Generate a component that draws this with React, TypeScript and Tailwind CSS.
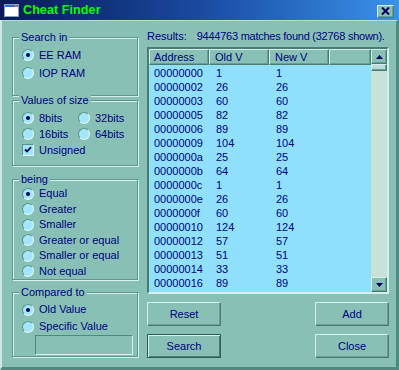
import React from 'react';

const ROWS: [string, string, string][] = [
  ['00000000', '1', '1'],
  ['00000002', '26', '26'],
  ['00000003', '60', '60'],
  ['00000005', '82', '82'],
  ['00000006', '89', '89'],
  ['00000009', '104', '104'],
  ['0000000a', '25', '25'],
  ['0000000b', '64', '64'],
  ['0000000c', '1', '1'],
  ['0000000e', '26', '26'],
  ['0000000f', '60', '60'],
  ['00000010', '124', '124'],
  ['00000012', '57', '57'],
  ['00000013', '51', '51'],
  ['00000014', '33', '33'],
  ['00000016', '89', '89'],
];

const raised =
  'border border-t-[#d4f0ea] border-l-[#d4f0ea] border-b-[#4a7c75] border-r-[#4a7c75] shadow-[inset_-1px_-1px_0_#6a9f97]';

function Radio({ label, checked = false }: { label: string; checked?: boolean }) {
  return (
    <div className="flex items-center gap-[5px]">
      <span className="w-[12px] h-[12px] rounded-full bg-[#a4e6fc] border border-t-[#5f928b] border-l-[#5f928b] border-b-[#e0f6f2] border-r-[#e0f6f2] flex items-center justify-center shrink-0">
        {checked && <span className="w-[4px] h-[4px] rounded-full bg-[#000060]" />}
      </span>
      <span className="leading-none whitespace-nowrap">{label}</span>
    </div>
  );
}

function Group({ title, className, children }: { title: string; className: string; children: React.ReactNode }) {
  return (
    <div
      className={`relative w-[126px] border border-[#5f978e] shadow-[inset_1px_1px_0_#d6f0ea,1px_1px_0_#d6f0ea] ${className}`}
    >
      {/* caption sits on top of the etched border */}
      <span className="absolute left-[6px] top-[-8px] px-[2px] bg-[#88c0b6] leading-[14px] whitespace-nowrap">{title}</span>
      {children}
    </div>
  );
}

export default function App() {
  return (
    <div className="w-[399px] h-[370px] flex flex-col bg-[#88c0b6] text-[#000080] text-[11px] [font-family:'Liberation_Sans',Arial,sans-serif] overflow-hidden">
      {/* Title bar */}
      <div className="h-[20px] flex items-center bg-gradient-to-r from-[#081a58] via-[#1a4aa0] to-[#3a92ea] pl-[4px] pr-[5px] shrink-0">
        <svg width="15" height="13" viewBox="0 0 15 13" className="shrink-0">
          <rect x="0.5" y="0.5" width="14" height="12" fill="#ffffff" stroke="#8aa0c0" />
          <rect x="1" y="1" width="13" height="2" fill="#2a6ee0" />
          <rect x="11" y="1" width="2" height="2" fill="#f07030" />
        </svg>
        <span className="ml-[4px] text-[#00ff00] font-bold text-[12.5px] leading-none tracking-[0.1px]">Cheat Finder</span>
        <div className="flex-1" />
        <div className={`w-[17px] h-[13px] mt-[2px] bg-[#88c0b6] flex items-center justify-center ${raised}`}>
          <svg width="9" height="8" viewBox="0 0 9 8">
            <path d="M1 0.5 L8 7.5 M8 0.5 L1 7.5" stroke="#000060" strokeWidth="2" />
          </svg>
        </div>
      </div>

      {/* Body */}
      <div className="flex-1 flex border-l-2 border-l-[#cce8e2] border-r-[3px] border-r-[#4f8a82] border-b-[3px] border-b-[#4f8a82] border-t border-t-[#b8dcd4]">
        {/* Left column */}
        <div className="flex flex-col pl-[10px] w-[138px] shrink-0">
          <Group title="Search in" className="mt-[16px] h-[59px] pt-[8px] pl-[9px] flex flex-col">
            <div className="h-[18px] flex items-center">
              <Radio label="EE RAM" checked />
            </div>
            <div className="h-[18px] flex items-center">
              <Radio label="IOP RAM" />
            </div>
          </Group>

          <Group title="Values of size" className="mt-[4px] h-[66px] pt-[9px] pl-[9px] flex flex-col">
            <div className="h-[16px] flex items-center">
              <div className="w-[56px]">
                <Radio label="8bits" checked />
              </div>
              <Radio label="32bits" />
            </div>
            <div className="h-[16px] flex items-center">
              <div className="w-[56px]">
                <Radio label="16bits" />
              </div>
              <Radio label="64bits" />
            </div>
            <div className="h-[16px] flex items-center gap-[5px]">
              <span className="w-[12px] h-[12px] bg-[#a4e6fc] border border-t-[#5f928b] border-l-[#5f928b] border-b-[#e0f6f2] border-r-[#e0f6f2] flex items-center justify-center">
                <svg width="8" height="8" viewBox="0 0 8 8">
                  <path d="M1 3.5 L3 5.5 L7 1.2" stroke="#000060" strokeWidth="1.8" fill="none" />
                </svg>
              </span>
              <span className="leading-none">Unsigned</span>
            </div>
          </Group>

          <Group title="being" className="mt-[13px] h-[101px] pt-[6px] pl-[9px] flex flex-col">
            {['Equal', 'Greater', 'Smaller', 'Greater or equal', 'Smaller or equal', 'Not equal'].map((label, i) => (
              <div key={label} className="h-[15.5px] flex items-center">
                <Radio label={label} checked={i === 0} />
              </div>
            ))}
          </Group>

          <Group title="Compared to" className="mt-[12px] h-[65px] pt-[8px] pl-[9px] flex flex-col">
            <div className="h-[17px] flex items-center">
              <Radio label="Old Value" checked />
            </div>
            <div className="h-[17px] flex items-center">
              <Radio label="Specific Value" />
            </div>
            <div className="ml-[13px] w-[98px] h-[20px] bg-[#88c0b6] border border-t-[#4f8a82] border-l-[#4f8a82] border-b-[#d4f0ea] border-r-[#d4f0ea]" />
          </Group>
        </div>

        {/* Right column */}
        <div className="ml-[7px] w-[242px] flex flex-col">
          <div className="mt-[9px] h-[13px] flex items-center leading-none whitespace-nowrap">
            <span>Results:</span>
            <span className="ml-[10px] tracking-[-0.25px]">9444763 matches found (32768 shown).</span>
          </div>

          {/* Result list */}
          <div className="mt-[4px] h-[247px] flex border-2 border-t-[#4a7c75] border-l-[#4a7c75] border-b-[#d4f0ea] border-r-[#d4f0ea] bg-[#90e0fc]">
            <div className="flex-1 flex flex-col">
              <div className="h-[16px] flex shrink-0 bg-[#88c0b6]">
                <div className={`w-[60px] pl-[4px] flex items-center ${raised}`}>Address</div>
                <div className={`w-[60px] pl-[5px] flex items-center ${raised}`}>Old V</div>
                <div className={`w-[60px] pl-[5px] flex items-center ${raised}`}>New V</div>
                <div className={`flex-1 ${raised}`} />
              </div>
              <div className="pt-[1px] flex flex-col">
                {ROWS.map(([addr, oldV, newV]) => (
                  <div key={addr} className="h-[14px] flex items-center leading-none">
                    <span className="w-[60px] pl-[5px]">{addr}</span>
                    <span className="w-[60px] pl-[7px]">{oldV}</span>
                    <span className="w-[60px] pl-[7px]">{newV}</span>
                  </div>
                ))}
              </div>
            </div>

            {/* Scrollbar */}
            <div className="w-[16px] flex flex-col bg-[#c8e2da]">
              <div className={`h-[15px] bg-[#88c0b6] flex items-center justify-center ${raised}`}>
                <svg width="7" height="4" viewBox="0 0 7 4">
                  <path d="M3.5 0 L7 4 L0 4 Z" fill="#000060" />
                </svg>
              </div>
              <div className={`h-[7px] bg-[#b8dcd4] ${raised}`} />
              <div className="flex-1" />
              <div className={`h-[15px] bg-[#88c0b6] flex items-center justify-center ${raised}`}>
                <svg width="7" height="4" viewBox="0 0 7 4">
                  <path d="M0 0 L7 0 L3.5 4 Z" fill="#000060" />
                </svg>
              </div>
            </div>
          </div>

          <div className="mt-[8px] flex justify-between">
            <button className={`w-[74px] h-[24px] bg-[#88c0b6] text-[#000080] ${raised}`}>Reset</button>
            <button className={`w-[74px] h-[24px] bg-[#88c0b6] text-[#000080] ${raised}`}>Add</button>
          </div>
          <div className="mt-[8px] flex justify-between">
            <button className="w-[74px] h-[24px] bg-[#88c0b6] text-[#000080] border border-[#2f5c56] shadow-[inset_1px_1px_0_#d4f0ea,inset_-1px_-1px_0_#4a7c75]">
              Search
            </button>
            <button className={`w-[74px] h-[24px] bg-[#88c0b6] text-[#000080] ${raised}`}>Close</button>
          </div>
        </div>
      </div>
    </div>
  );
}
